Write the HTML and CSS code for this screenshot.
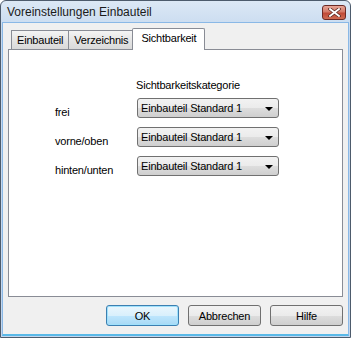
FILE: index.html
```html
<!DOCTYPE html>
<html lang="de">
<head>
    <meta charset="UTF-8">
    <title>Voreinstellungen Einbauteil</title>
    <link rel="stylesheet" href="styles.css">
</head>
<body>
    <div class="window">
        <div class="titlebar">
            <span class="title">Voreinstellungen Einbauteil</span>
            <button class="close-button">
                <svg width="13" height="9" viewBox="0 0 13 9">
                    <path d="M2 1 L11 8 M11 1 L2 8" stroke="#5a2a22" stroke-width="3.4" stroke-linecap="square"/>
                    <path d="M2 1 L11 8 M11 1 L2 8" stroke="#ffffff" stroke-width="1.8" stroke-linecap="square"/>
                </svg>
            </button>
        </div>

        <div class="client">
            <div class="tabs">
                <div class="tab">Einbauteil</div>
                <div class="tab">Verzeichnis</div>
                <div class="tab selected">Sichtbarkeit</div>
            </div>

            <div class="tab-panel">
                <div class="form-grid">
                    <div></div>
                    <div class="column-head">Sichtbarkeitskategorie</div>

                    <div class="row-label">frei</div>
                    <div class="combo">
                        <span>Einbauteil Standard 1</span>
                        <span class="arrow"></span>
                    </div>

                    <div class="row-label">vorne/oben</div>
                    <div class="combo">
                        <span>Einbauteil Standard 1</span>
                        <span class="arrow"></span>
                    </div>

                    <div class="row-label">hinten/unten</div>
                    <div class="combo">
                        <span>Einbauteil Standard 1</span>
                        <span class="arrow"></span>
                    </div>
                </div>
            </div>

            <div class="button-row">
                <button class="dialog-button default">OK</button>
                <button class="dialog-button">Abbrechen</button>
                <button class="dialog-button">Hilfe</button>
            </div>
        </div>
    </div>
</body>
</html>
```

FILE: styles.css
```css
* {
    margin: 0;
    padding: 0;
    box-sizing: border-box;
    font-family: "Liberation Sans", Arial, sans-serif;
    letter-spacing: -0.2px;
}

body {
    background-color: #ffffff;
    width: 353px;
    height: 338px;
    overflow: hidden;
}

.window {
    width: 351px;
    height: 338px;
    border: 1px solid #4d5b6c;
    border-radius: 6px 6px 0 0;
    background: linear-gradient(#dce8f5, #c6d9ef 30px, #c2d6ee);
    display: flex;
    flex-direction: column;
    padding: 0 1px 1px 1px;
}

.titlebar {
    height: 21px;
    display: flex;
    align-items: center;
    justify-content: space-between;
    padding: 0 3px 0 5px;
}

.title {
    font-size: 12px;
    color: #1a1a1a;
    margin-top: 1px;
    letter-spacing: 0;
}

.close-button {
    width: 24px;
    height: 15px;
    margin-top: 2px;
    border: 1px solid #6b2a25;
    border-radius: 3px;
    background: linear-gradient(#e7a597, #d47a68 45%, #c04a37 55%, #cf6b52);
    display: flex;
    align-items: center;
    justify-content: center;
}

.close-button svg {
    display: block;
}

.client {
    flex: 1;
    background-color: #f0f0f0;
    border: 1px solid #8ab8e6;
    border-bottom: 2px solid #59b9e8;
    display: flex;
    flex-direction: column;
    padding: 4px 5px 0 5px;
}

.tabs {
    display: flex;
    align-items: flex-end;
    height: 22px;
    padding-left: 3px;
}

.tab {
    font-size: 11px;
    height: 19px;
    padding: 3px 5px 0 5px;
    border: 1px solid #898c95;
    border-bottom: none;
    background: linear-gradient(#f4f4f4, #e5e5e5 50%, #d9d9d9);
    color: #000000;
    margin-right: -1px;
}

.tab.selected {
    height: 22px;
    background: #ffffff;
    padding: 3px 8px 0 8px;
    margin-left: -1px;
    margin-bottom: -1px;
    position: relative;
    z-index: 1;
    border-radius: 2px 2px 0 0;
}

.tab-panel {
    height: 248px;
    background-color: #ffffff;
    border: 1px solid #898c95;
    padding: 26px 0 0 46px;
}

.form-grid {
    display: grid;
    grid-template-columns: 82px 142px;
    row-gap: 9px;
    align-items: center;
}

.column-head {
    font-size: 11px;
    margin-left: -1px;
    line-height: 14px;
    margin-top: 2px;
    margin-bottom: -3px;
}

.row-label {
    font-size: 11px;
    color: #000000;
    padding-top: 7px;
}

.combo {
    height: 20px;
    border: 1px solid #707070;
    border-radius: 3px;
    background: linear-gradient(#f2f2f2, #ebebeb 50%, #dddddd 51%, #cfcfcf);
    font-size: 11px;
    display: flex;
    align-items: center;
    justify-content: space-between;
    padding: 0 5px 0 3px;
}

.arrow {
    width: 0;
    height: 0;
    border-left: 4px solid transparent;
    border-right: 4px solid transparent;
    border-top: 4px solid #000000;
    margin-top: 1px;
}

.button-row {
    display: flex;
    justify-content: flex-end;
    gap: 9px;
    padding-top: 8px;
}

.dialog-button {
    width: 73px;
    height: 21px;
    font-size: 11px;
    color: #000000;
    border: 1px solid #707070;
    border-radius: 3px;
    background: linear-gradient(#f2f2f2, #ebebeb 50%, #dddddd 51%, #cfcfcf);
}

.dialog-button.default {
    border-color: #3c7fb1;
    background: linear-gradient(#eaf6fd, #d9f0fc 50%, #bee6fd 51%, #a7d9f5);
    box-shadow: inset 0 0 0 1px #9fe1fc;
}
```
